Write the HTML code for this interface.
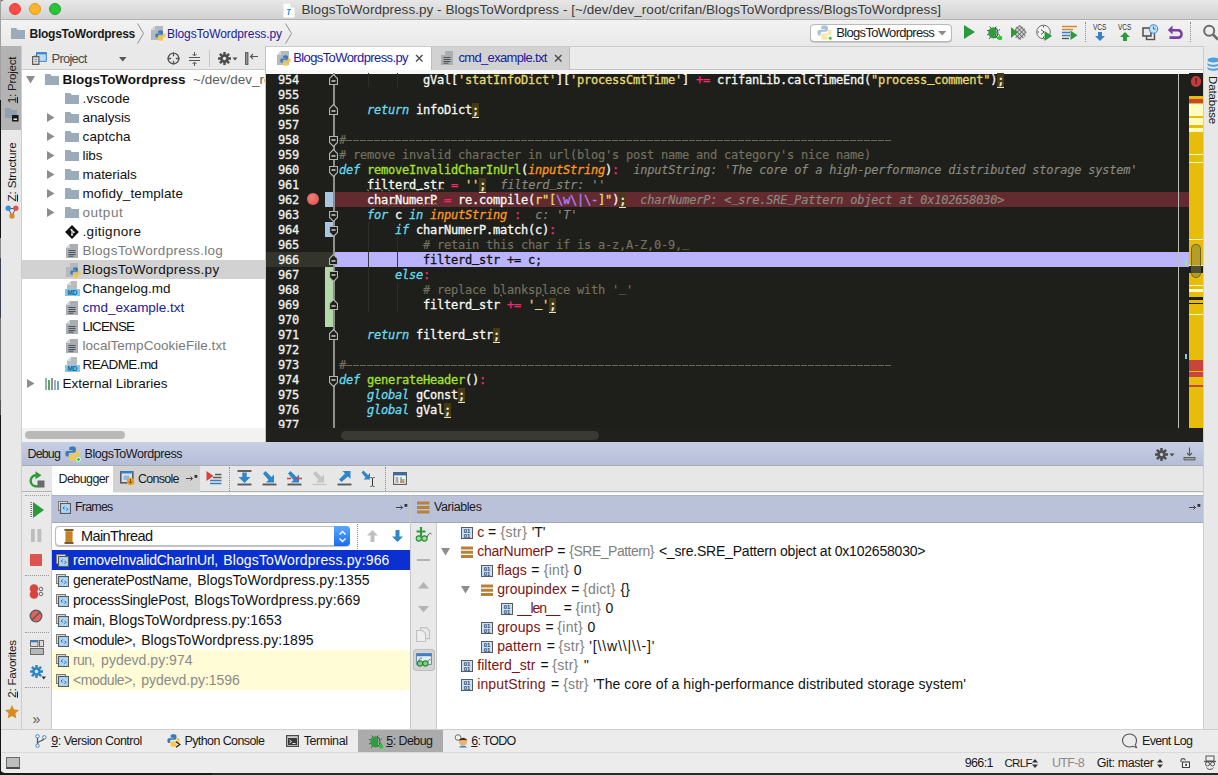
<!DOCTYPE html>
<html lang="en">
<head>
<meta charset="utf-8">
<title>BlogsToWordpress.py - BlogsToWordpress</title>
<style>
html,body{margin:0;padding:0;background:#ececec;}
body{width:1218px;height:775px;overflow:hidden;font-family:"Liberation Sans","Noto Sans CJK SC",sans-serif;}
#app{position:relative;width:1218px;height:775px;overflow:hidden;background:#ececec;}
#app div,#app span.t,#app svg{position:absolute;}
#app div{box-sizing:border-box;}
span.t{white-space:pre;}
.code,.ln{font-family:"DejaVu Sans Mono","Liberation Mono",monospace;font-size:12px;letter-spacing:-0.224px;font-weight:400;line-height:15px;height:15px;white-space:pre;-webkit-text-stroke:0.3px currentColor;}
.code{color:#f8f8f2;}
.ln{color:#f0f0ea;}
.kw{color:#66d9ef;font-style:italic;}
.fn{color:#a6e22e;}
.pm{color:#fd971f;font-style:italic;}
.op{color:#f92672;}
.st{color:#e6db74;}
.cm{color:#75715e;-webkit-text-stroke:0.15px currentColor;}
.hint{color:#8a8a80;font-style:italic;-webkit-text-stroke:0.15px currentColor;}
.rx{color:#ae81ff;}
.sc{background:#463a10;border-bottom:1px solid #e8e0c0;}
.wv{text-decoration:underline wavy rgba(190,200,150,.7) 0.8px;text-underline-offset:-1.5px;}
.us{position:relative;top:-2px;}

</style>
</head>
<body>
<div id="app">
<div style="left:0px;top:0px;width:8px;height:8px;background:#6a6a6a;"></div>
<div style="left:0px;top:0px;width:1218px;height:20.3px;background:linear-gradient(#e8e8e8,#d1d1d1);border-bottom:1px solid #b2b2b2;border-radius:5px 0 0 0;"></div>
<div style="left:9.2px;top:2.9px;width:12px;height:12px;border-radius:50%;background:#fb4b49;border:0.5px solid #df3f3d;"></div>
<div style="left:29.200000000000003px;top:2.9px;width:12px;height:12px;border-radius:50%;background:#fdb32a;border:0.5px solid #de9a22;"></div>
<div style="left:49.2px;top:2.9px;width:12px;height:12px;border-radius:50%;background:#2ac33b;border:0.5px solid #1fa52f;"></div>
<svg style="left:283px;top:3px;" width="12" height="15" viewBox="0 0 12 15"><path d="M0 0h8l4 4v11H0z" fill="#fdfdfd" stroke="#c9c9c9" stroke-width=".6"/><path d="M8 0v4h4" fill="#e4e4e4" stroke="#c9c9c9" stroke-width=".5"/><path d="M4.200 6.500h3.800M6.300 6.500L5.300 12" stroke="#2a8bd8" stroke-width="1.100" fill="none"/></svg>
<span class="t" style="left:301.5px;top:1.0px;line-height:18px;font-size:13.5px;color:#3a3a3a;letter-spacing:0.039px;">BlogsToWordpress.py - BlogsToWordpress - [~/dev/dev_root/crifan/BlogsToWordpress/BlogsToWordpress]</span>
<div style="left:0px;top:20px;width:1218px;height:26px;background:linear-gradient(#f2f2f2,#e9e9e9);"></div>
<div style="left:0px;top:45.5px;width:1218px;height:1px;background:#cbcbcb;"></div>
<svg style="left:11px;top:28px;" width="14" height="11" viewBox="0 0 14 11"><path d="M0 0h5.2l1.6 2H14v9H0z" fill="#9cabb9"/></svg>
<span class="t" style="left:29.5px;top:24.5px;line-height:18px;font-size:12px;color:#1a1a1a;font-weight:700;letter-spacing:-0.255px;">BlogsToWordpress</span>
<svg style="left:136px;top:23px;" width="9" height="21" viewBox="0 0 9 21"><path d="M1.500.5L7.500 10.500 1.500 20.500" fill="none" stroke="#8f8f8f" stroke-width="1"/></svg>
<svg style="left:151px;top:26px;" width="12" height="14" viewBox="0 0 12 14"><path d="M4 0h8v14H0V4z" fill="#b4b9be"/><path d="M0 4h4V0z" fill="#d2d6da"/></svg>
<svg style="left:154.6px;top:30.2px;" width="11" height="11" viewBox="0 0 12 12"><path d="M5.9.3C3.2.3 3.4 1.5 3.4 1.5v1.9h2.7v.5H2.2S.3 3.700.3 6.100c0 2.400 1.600 2.300 1.600 2.300h1V6.900s-.1-1.600 1.600-1.600h2.700s1.500 0 1.500-1.500V1.700S8.900.3 5.900.3z" fill="#3d7ab5"/><path d="M6.100 11.700c2.700 0 2.500-1.200 2.500-1.200V8.600H5.900v-.5h3.900s1.900.2 1.900-2.200c0-2.400-1.600-2.300-1.600-2.300h-1v1.500s.1 1.600-1.600 1.600H4.800s-1.500 0-1.500 1.500v2.100s-.2 1.400 2.800 1.400z" fill="#f7c93e"/></svg>
<span class="t" style="left:167px;top:24.5px;line-height:18px;font-size:12px;color:#1a1a9a;letter-spacing:-0.079px;">BlogsToWordpress.py</span>
<svg style="left:283.5px;top:23px;" width="9" height="21" viewBox="0 0 9 21"><path d="M1.500.5L7.500 10.500 1.500 20.500" fill="none" stroke="#8f8f8f" stroke-width="1"/></svg>
<div style="left:810px;top:23.5px;width:142px;height:18px;background:#fff;border:1px solid #b9b9b9;border-radius:4px;box-shadow:0 0.5px 0 #a9a9a9;"></div>
<svg style="left:816.5px;top:25px;" width="15" height="15" viewBox="0 0 12 12"><g opacity=".45"><path d="M5.9.3C3.2.3 3.4 1.5 3.4 1.5v1.9h2.7v.5H2.2S.3 3.7.3 6.100c0 2.400 1.600 2.300 1.600 2.300h1V6.900s-.1-1.600 1.600-1.600h2.700s1.500 0 1.500-1.500V1.700S8.900.3 5.900.3z" fill="#3d7ab5"/><path d="M6.100 11.700c2.700 0 2.500-1.200 2.500-1.200V8.600H5.900v-.5h3.900s1.900.2 1.900-2.200c0-2.400-1.600-2.300-1.600-2.300h-1v1.500s.1 1.600-1.600 1.600H4.800s-1.500 0-1.500 1.500v2.100s-.2 1.400 2.800 1.400z" fill="#f7c93e"/></g><circle cx="10.600" cy="10.600" r="1.400" fill="#1fd02a" stroke="#fff" stroke-width=".4"/></svg>
<span class="t" style="left:836.3px;top:23.5px;line-height:18px;font-size:13px;color:#1a1a1a;letter-spacing:-0.686px;">BlogsToWordpress</span>
<svg style="left:938px;top:31px;" width="9" height="5" viewBox="0 0 9 5"><path d="M0 0h8.400L4.200 4.500z" fill="#8a8a8a"/></svg>
<svg style="left:964px;top:25px;" width="11" height="14" viewBox="0 0 11 14"><path d="M0 0L11 7 0 14z" fill="#2b9a3c"/></svg>
<svg style="left:986px;top:24px;" width="17" height="17" viewBox="0 0 17 17"><path d="M3.500 2.500l2 2M10.500 2.500l-2 2M1 6.500h2.500M1 11l2.500-1M3 15l2-2.500M12.500 6.500l1.500-1M12.500 10.500l1.500 1M10.500 13l1.500 2" stroke="#555" stroke-width="1" fill="none"/><ellipse cx="7.300" cy="8.800" rx="5" ry="5.600" fill="#2f9c40"/><path d="M8.800 3.450A5 5.600 0 0 1 8.800 14.150A9 9 0 0 0 8.800 3.450z" fill="#3a3a3a"/><path d="M10.300 5.500A7 7 0 0 1 10.300 12" stroke="#d8d8d8" stroke-width=".8" fill="none"/><circle cx="14" cy="14" r="2.300" fill="#1fd02a"/></svg>
<svg style="left:1011px;top:25px;" width="16" height="15" viewBox="0 0 16 15"><defs><pattern id="hx" width="3" height="3" patternUnits="userSpaceOnUse" patternTransform="rotate(45)"><rect width="3" height="3" fill="#d8d8d8"/><path d="M0 0h3M0 0v3" stroke="#555" stroke-width="1.300"/></pattern></defs><path d="M4 2.500L9 0l5 3.500 1.500 4L14 12l-5 3-5-2.500z" fill="url(#hx)"/><path d="M0 2l6.500 5.500L0 13z" fill="#2b9a3c"/></svg>
<svg style="left:1036px;top:24px;" width="17" height="17" viewBox="0 0 17 17"><circle cx="7.500" cy="8" r="6.800" fill="#f4f4f4" stroke="#6a6a6a" stroke-width="1"/><path d="M7.500 2v1.500M7.500 12.500V14M1.500 8H3M5 5.500L8 8 5 10.500" stroke="#555" stroke-width="1" fill="none"/><path d="M8.500 7l7.500 5-7.500 5z" fill="#2b9a3c"/></svg>
<svg style="left:1061px;top:25px;" width="17" height="15" viewBox="0 0 17 15"><path d="M1 1.500h15M1 4.500h11" stroke="#c98b3c" stroke-width="1.500"/><path d="M1 7.500h8M1 10.500h8" stroke="#3b7fc4" stroke-width="1.500"/><path d="M1 13.500h7" stroke="#555" stroke-width="1.300"/><path d="M9.500 5.500l7 4.700-7 4.800z" fill="#2b9a3c"/></svg>
<div style="left:1085px;top:22px;width:1px;height:20px;border-left:1px dotted #8a8a8a;"></div>
<span class="t" style="left:1093px;top:23.0px;line-height:10px;font-size:8.2px;color:#333;transform:scaleX(.8);transform-origin:0 50%;">VCS</span>
<svg style="left:1095px;top:31.5px;" width="10" height="9" viewBox="0 0 10 9"><path d="M3 0h4v4h3L5 9 0 4h3z" fill="#3b82c4"/></svg>
<span class="t" style="left:1117.7px;top:23.0px;line-height:10px;font-size:8.2px;color:#333;transform:scaleX(.8);transform-origin:0 50%;">VCS</span>
<svg style="left:1120px;top:31.5px;" width="10" height="9" viewBox="0 0 10 9"><path d="M5 0l5 5H7v4H3V5H0z" fill="#2b9a3c"/></svg>
<svg style="left:1142px;top:24px;" width="17" height="17" viewBox="0 0 17 17"><rect x="4.500" y="7.500" width="8" height="8" fill="#e9e9e9" stroke="#555" stroke-width="1.400"/><rect x="1" y="4" width="8" height="8" fill="#e9e9e9" stroke="#555" stroke-width="1.600"/><circle cx="11.500" cy="5" r="4.200" fill="#bfe0f7" stroke="#3b8fd6" stroke-width="1.100"/><path d="M11.500 2.500V5h2" stroke="#2a6fb0" stroke-width="1" fill="none"/></svg>
<svg style="left:1167px;top:25px;" width="16" height="15" viewBox="0 0 16 15"><path d="M5.500 0.500L0.800 5l4.700 4.500V6.500h5.200c1.600 0 2.600 1 2.600 2.400s-1 2.400-2.600 2.400H2.500v2.700h8.500c3 0 4.800-2.200 4.800-5.100s-1.800-5-4.800-5H5.500z" fill="#7b3fa0"/></svg>
<div style="left:1190px;top:22px;width:1px;height:20px;border-left:1px dotted #8a8a8a;"></div>
<svg style="left:1202px;top:23px;" width="16" height="18" viewBox="0 0 16 18"><circle cx="7.200" cy="7.700" r="5" fill="none" stroke="#6a6a6a" stroke-width="2"/><path d="M11 11.500l5 5" stroke="#6a6a6a" stroke-width="2.600"/></svg>
<div style="left:0px;top:46px;width:22px;height:707px;background:#e8e8e8;border-right:1px solid #cdcdcd;"></div>
<div style="left:0px;top:46px;width:21px;height:84px;background:#b3b3b3;"></div>
<span class="t" style="left:11.500px;top:79.800px;font-size:11.5px;letter-spacing:-0.21px;color:#1a1a1a;line-height:14px;transform:translate(-50%,-50%) rotate(-90deg);"><u>1</u>: Project</span>
<span class="t" style="left:11.500px;top:171.800px;font-size:11.5px;letter-spacing:-0.09px;color:#1a1a1a;line-height:14px;transform:translate(-50%,-50%) rotate(-90deg);"><u>Z</u>: Structure</span>
<span class="t" style="left:11.500px;top:669.300px;font-size:11.5px;letter-spacing:-0.22px;color:#1a1a1a;line-height:14px;transform:translate(-50%,-50%) rotate(-90deg);"><u>2</u>: Favorites</span>
<svg style="left:5px;top:107.5px;" width="14" height="14" viewBox="0 0 14 14"><path d="M0 0h5l1.500 2H12v8H0z" fill="#8fa0b0"/><rect x="7" y="7" width="6.500" height="6.500" fill="#1a1a1a"/><rect x="8.500" y="10.500" width="3.500" height="1.500" fill="#e8e8e8"/></svg>
<svg style="left:5px;top:204.5px;" width="14" height="14" viewBox="0 0 14 14"><path d="M3.500 3.500L10.500 3.500 7 11z" fill="none" stroke="#555" stroke-width="1"/><circle cx="3.200" cy="3.200" r="2.700" fill="#3b8fd6"/><circle cx="10.800" cy="3.200" r="2.700" fill="#e0524c"/><circle cx="7" cy="11" r="2.700" fill="#d98a30"/></svg>
<svg style="left:5px;top:704.5px;" width="14" height="13" viewBox="0 0 14 13"><path d="M7 0l2.100 4.500 4.900.6-3.600 3.400.9 4.900L7 11l-4.300 2.400.9-4.900L0 5.100l4.900-.6z" fill="#d98a20"/></svg>
<div style="left:22px;top:46px;width:244px;height:24px;background:#e9e9e9;border-bottom:1px solid #c9c9c9;"></div>
<div style="left:22px;top:70px;width:243px;height:362px;background:#fff;"></div>
<div style="left:265px;top:46px;width:1px;height:396px;background:#c4c4c4;"></div>
<span class="t" style="left:51.5px;top:49.5px;line-height:18px;font-size:13px;color:#4a4a4a;letter-spacing:-0.781px;">Project</span>
<svg style="left:119px;top:57px;" width="8" height="5" viewBox="0 0 8 5"><path d="M0 0h7.500L3.750 4.500z" fill="#555"/></svg>
<svg style="left:32px;top:51.5px;" width="15" height="13" viewBox="0 0 15 13"><rect x="4.500" y="0.700" width="9.800" height="8.600" fill="#b9dcf6" stroke="#3b82c4" stroke-width="1"/><rect x="4.500" y="0.700" width="9.800" height="1.600" fill="#3b82c4"/><rect x="0.600" y="4.600" width="6.300" height="7.800" fill="#dcdcdc" stroke="#5f5f5f" stroke-width="1.200"/><rect x="2.300" y="3.600" width="3" height="1.600" fill="#5f5f5f"/><path d="M2.500 7.500h2.600M2.500 9.500h2.600" stroke="#8a8a8a" stroke-width=".8"/></svg>
<svg style="left:166.5px;top:52px;" width="13" height="13" viewBox="0 0 13 13"><circle cx="6.500" cy="6.500" r="5.400" fill="none" stroke="#555" stroke-width="1.300"/><path d="M6.500 0.500v3.700M6.500 8.800v3.700M0.500 6.500h3.700M8.800 6.500h3.700" stroke="#555" stroke-width="1.300"/></svg>
<svg style="left:188px;top:51.5px;" width="13" height="14" viewBox="0 0 13 14"><path d="M1 5.500h11M1 8.500h11" stroke="#555" stroke-width="1"/><path d="M6.500 0v3.500M4.500 2l2 2 2-2M6.500 14v-3.500M4.500 12l2-2 2 2" stroke="#555" stroke-width="1" fill="none"/></svg>
<div style="left:209px;top:50px;width:1px;height:17px;background:#c6c6c6;"></div>
<svg style="left:217.5px;top:52px;" width="21" height="13" viewBox="0 0 21 13"><g transform="translate(6.5 6.5)"><g fill="#4d4d4d"><rect x="-1.250" y="-6.500" width="2.500" height="4" transform="rotate(0)"/><rect x="-1.250" y="-6.500" width="2.500" height="4" transform="rotate(45)"/><rect x="-1.250" y="-6.500" width="2.500" height="4" transform="rotate(90)"/><rect x="-1.250" y="-6.500" width="2.500" height="4" transform="rotate(135)"/><rect x="-1.250" y="-6.500" width="2.500" height="4" transform="rotate(180)"/><rect x="-1.250" y="-6.500" width="2.500" height="4" transform="rotate(225)"/><rect x="-1.250" y="-6.500" width="2.500" height="4" transform="rotate(270)"/><rect x="-1.250" y="-6.500" width="2.500" height="4" transform="rotate(315)"/></g><circle r="4.300" fill="#4d4d4d"/><circle r="1.700" fill="#e9e9e9"/></g><path d="M14.500 5.500h5l-2.500 3z" fill="#4d4d4d"/></svg>
<svg style="left:245px;top:52px;" width="14" height="13" viewBox="0 0 14 13"><rect x=".6" y=".6" width="2.300" height="11.800" fill="#9a9a9a" stroke="#555" stroke-width="1"/><path d="M13 4.500H5.500M8 2L5.500 4.500 8 7" stroke="#555" stroke-width="1.100" fill="none"/></svg>
<div style="left:22px;top:260px;width:243px;height:19px;background:#d2d2d2;"></div>
<svg style="left:25.5px;top:76px;" width="9" height="8" viewBox="0 0 9 8"><path d="M0 0h9L4.500 7.500z" fill="#8d8d8d"/></svg>
<svg style="left:45px;top:74px;" width="14" height="11" viewBox="0 0 14 11"><path d="M0 0h5.2l1.6 2H14v9H0z" fill="#9cabb9"/></svg>
<span class="t" style="left:62.5px;top:70.5px;line-height:18px;font-size:13.5px;color:#111;font-weight:700;letter-spacing:-0.017px;">BlogsToWordpress</span>
<span class="t" style="left:193px;top:70.5px;line-height:18px;font-size:13.5px;color:#5c5c5c;width:72px;overflow:hidden;">~/dev/dev_root/crifan/BlogsToWordpress</span>
<svg style="left:65px;top:93.0px;" width="14" height="11" viewBox="0 0 14 11"><path d="M0 0h5.2l1.6 2H14v9H0z" fill="#9cabb9"/></svg>
<span class="t" style="left:82.5px;top:89.5px;line-height:18px;font-size:13.5px;color:#111;letter-spacing:0.138px;">.vscode</span>
<svg style="left:46.5px;top:113.0px;" width="8" height="9" viewBox="0 0 8 9"><path d="M0 0l7.500 4.500L0 9z" fill="#8d8d8d"/></svg>
<svg style="left:65px;top:112.0px;" width="14" height="11" viewBox="0 0 14 11"><path d="M0 0h5.2l1.6 2H14v9H0z" fill="#9cabb9"/></svg>
<span class="t" style="left:82.5px;top:108.5px;line-height:18px;font-size:13.5px;color:#111;letter-spacing:-0.098px;">analysis</span>
<svg style="left:46.5px;top:132.0px;" width="8" height="9" viewBox="0 0 8 9"><path d="M0 0l7.500 4.500L0 9z" fill="#8d8d8d"/></svg>
<svg style="left:65px;top:131.0px;" width="14" height="11" viewBox="0 0 14 11"><path d="M0 0h5.2l1.6 2H14v9H0z" fill="#9cabb9"/></svg>
<span class="t" style="left:82.5px;top:127.5px;line-height:18px;font-size:13.5px;color:#111;letter-spacing:0.136px;">captcha</span>
<svg style="left:46.5px;top:151.0px;" width="8" height="9" viewBox="0 0 8 9"><path d="M0 0l7.500 4.500L0 9z" fill="#8d8d8d"/></svg>
<svg style="left:65px;top:150.0px;" width="14" height="11" viewBox="0 0 14 11"><path d="M0 0h5.2l1.6 2H14v9H0z" fill="#9cabb9"/></svg>
<span class="t" style="left:82.5px;top:146.5px;line-height:18px;font-size:13.5px;color:#111;letter-spacing:-0.066px;">libs</span>
<svg style="left:46.5px;top:170.0px;" width="8" height="9" viewBox="0 0 8 9"><path d="M0 0l7.500 4.500L0 9z" fill="#8d8d8d"/></svg>
<svg style="left:65px;top:169.0px;" width="14" height="11" viewBox="0 0 14 11"><path d="M0 0h5.2l1.6 2H14v9H0z" fill="#9cabb9"/></svg>
<span class="t" style="left:82.5px;top:165.5px;line-height:18px;font-size:13.5px;color:#111;letter-spacing:-0.057px;">materials</span>
<svg style="left:46.5px;top:189.0px;" width="8" height="9" viewBox="0 0 8 9"><path d="M0 0l7.500 4.500L0 9z" fill="#8d8d8d"/></svg>
<svg style="left:65px;top:188.0px;" width="14" height="11" viewBox="0 0 14 11"><path d="M0 0h5.2l1.6 2H14v9H0z" fill="#9cabb9"/></svg>
<span class="t" style="left:82.5px;top:184.5px;line-height:18px;font-size:13.5px;color:#111;letter-spacing:0.096px;">mofidy_template</span>
<svg style="left:46.5px;top:208.0px;" width="8" height="9" viewBox="0 0 8 9"><path d="M0 0l7.500 4.500L0 9z" fill="#8d8d8d"/></svg>
<svg style="left:65px;top:207.0px;" width="14" height="11" viewBox="0 0 14 11"><path d="M0 0h5.2l1.6 2H14v9H0z" fill="#9cabb9"/></svg>
<span class="t" style="left:82.5px;top:203.5px;line-height:18px;font-size:13.5px;color:#7a7a7a;letter-spacing:0.534px;">output</span>
<svg style="left:64.5px;top:224.5px;" width="14" height="14" viewBox="0 0 14 14"><rect x="2.100" y="2.100" width="9.800" height="9.800" transform="rotate(45 7 7)" fill="#111"/><path d="M5.300 3.800l3.200 3.200M7 5.500v4.200" stroke="#fff" stroke-width="1" fill="none"/><circle cx="7" cy="9.800" r="1" fill="#fff"/><circle cx="8.700" cy="7.200" r="1" fill="#fff"/><circle cx="6.800" cy="5.200" r=".9" fill="#fff"/></svg>
<span class="t" style="left:82.5px;top:222.5px;line-height:18px;font-size:13.5px;color:#111;letter-spacing:0.320px;">.gitignore</span>
<svg style="left:66px;top:243.5px;" width="12" height="14" viewBox="0 0 12 14"><path d="M4 0h8v14H0V4z" fill="#a9aeb3"/><path d="M0 4h4V0z" fill="#cfd3d7"/><path d="M2.5 6.5h7M2.5 8.5h7M2.5 10.5h7M2.5 12.2h5" stroke="#4f5357" stroke-width="1"/></svg>
<span class="t" style="left:82.5px;top:241.5px;line-height:18px;font-size:13.5px;color:#7a7a7a;letter-spacing:0.284px;">BlogsToWordpress.log</span>
<svg style="left:66px;top:262.5px;" width="12" height="14" viewBox="0 0 12 14"><path d="M4 0h8v14H0V4z" fill="#b4b9be"/><path d="M0 4h4V0z" fill="#d2d6da"/></svg>
<svg style="left:69.6px;top:266.7px;" width="11" height="11" viewBox="0 0 12 12"><path d="M5.9.3C3.2.3 3.4 1.5 3.4 1.5v1.9h2.7v.5H2.2S.3 3.700.3 6.100c0 2.400 1.600 2.300 1.600 2.300h1V6.900s-.1-1.600 1.600-1.600h2.700s1.500 0 1.500-1.500V1.700S8.900.3 5.900.3z" fill="#3d7ab5"/><path d="M6.100 11.700c2.700 0 2.500-1.200 2.500-1.200V8.600H5.900v-.5h3.900s1.900.2 1.900-2.200c0-2.400-1.600-2.300-1.600-2.300h-1v1.500s.1 1.600-1.600 1.600H4.800s-1.500 0-1.500 1.500v2.100s-.2 1.400 2.800 1.400z" fill="#f7c93e"/></svg>
<span class="t" style="left:82.5px;top:260.5px;line-height:18px;font-size:13.5px;color:#111;letter-spacing:0.312px;">BlogsToWordpress.py</span>
<svg style="left:65px;top:280.5px;" width="15" height="15" viewBox="0 0 15 15"><path d="M6 0h6v8H2V4z" fill="#b9bdc1"/><path d="M2 4h4V0z" fill="#d6d9dc"/><rect x="0" y="8" width="15" height="7" fill="#79cbf3"/><text x="7.5" y="14" font-size="6.5" font-weight="700" text-anchor="middle" fill="#2a5a7a" font-family="Liberation Sans, sans-serif">MD</text></svg>
<span class="t" style="left:82.5px;top:279.5px;line-height:18px;font-size:13.5px;color:#111;letter-spacing:0.016px;">Changelog.md</span>
<svg style="left:66px;top:300.5px;" width="12" height="14" viewBox="0 0 12 14"><path d="M4 0h8v14H0V4z" fill="#a9aeb3"/><path d="M0 4h4V0z" fill="#cfd3d7"/><path d="M2.5 6.5h7M2.5 8.5h7M2.5 10.5h7M2.5 12.2h5" stroke="#4f5357" stroke-width="1"/></svg>
<span class="t" style="left:82.5px;top:298.5px;line-height:18px;font-size:13.5px;color:#1a1a9a;letter-spacing:-0.020px;">cmd_example.txt</span>
<svg style="left:66px;top:319.5px;" width="12" height="14" viewBox="0 0 12 14"><path d="M4 0h8v14H0V4z" fill="#a9aeb3"/><path d="M0 4h4V0z" fill="#cfd3d7"/><path d="M2.5 6.5h7M2.5 8.5h7M2.5 10.5h7M2.5 12.2h5" stroke="#4f5357" stroke-width="1"/></svg>
<span class="t" style="left:82.5px;top:317.5px;line-height:18px;font-size:13.5px;color:#111;letter-spacing:-0.862px;">LICENSE</span>
<svg style="left:66px;top:338.5px;" width="12" height="14" viewBox="0 0 12 14"><path d="M4 0h8v14H0V4z" fill="#a9aeb3"/><path d="M0 4h4V0z" fill="#cfd3d7"/><path d="M2.5 6.5h7M2.5 8.5h7M2.5 10.5h7M2.5 12.2h5" stroke="#4f5357" stroke-width="1"/></svg>
<span class="t" style="left:82.5px;top:336.5px;line-height:18px;font-size:13.5px;color:#7a7a7a;letter-spacing:0.041px;">localTempCookieFile.txt</span>
<svg style="left:65px;top:356.5px;" width="15" height="15" viewBox="0 0 15 15"><path d="M6 0h6v8H2V4z" fill="#b9bdc1"/><path d="M2 4h4V0z" fill="#d6d9dc"/><rect x="0" y="8" width="15" height="7" fill="#79cbf3"/><text x="7.5" y="14" font-size="6.5" font-weight="700" text-anchor="middle" fill="#2a5a7a" font-family="Liberation Sans, sans-serif">MD</text></svg>
<span class="t" style="left:82.5px;top:355.5px;line-height:18px;font-size:13.5px;color:#111;letter-spacing:-0.585px;">README.md</span>
<svg style="left:26.5px;top:379.0px;" width="8" height="9" viewBox="0 0 8 9"><path d="M0 0l7.500 4.500L0 9z" fill="#8d8d8d"/></svg>
<svg style="left:45px;top:377.5px;" width="14" height="12" viewBox="0 0 14 12"><path d="M1 0v12" stroke="#7a8a99" stroke-width="1.500"/><path d="M4 2v10" stroke="#3fa046" stroke-width="1.800"/><path d="M7 0v12" stroke="#7a8a99" stroke-width="1.800"/><path d="M10 2v10" stroke="#9aa7b4" stroke-width="1.800"/><path d="M13 3v9" stroke="#3b82c4" stroke-width="1.500"/></svg>
<span class="t" style="left:62.5px;top:374.5px;line-height:18px;font-size:13.5px;color:#111;letter-spacing:-0.003px;">External Libraries</span>
<div style="left:22px;top:427.6px;width:243px;height:14.2px;background:#f2f2f2;"></div>
<div style="left:25px;top:431px;width:100.3px;height:7.6px;background:#b9b9b9;border-radius:4px;"></div>
<div style="left:266px;top:46.5px;width:937px;height:23.5px;background:#ebebeb;border-bottom:1px solid #c2c2c2;"></div>
<div style="left:266px;top:47px;width:164.5px;height:26.7px;background:#fff;"></div>
<div style="left:430.5px;top:47px;width:139.5px;height:22.5px;background:#d2d2d2;border-left:1px solid #bdbdbd;border-right:1px solid #bdbdbd;"></div>
<div style="left:266px;top:70px;width:937px;height:3.7px;background:#f7f7f7;"></div>
<svg style="left:276.5px;top:51px;" width="12" height="14" viewBox="0 0 12 14"><path d="M4 0h8v14H0V4z" fill="#b4b9be"/><path d="M0 4h4V0z" fill="#d2d6da"/></svg>
<svg style="left:280.1px;top:55.2px;" width="11" height="11" viewBox="0 0 12 12"><path d="M5.9.3C3.2.3 3.4 1.5 3.4 1.5v1.9h2.7v.5H2.2S.3 3.700.3 6.100c0 2.400 1.600 2.300 1.600 2.300h1V6.900s-.1-1.600 1.600-1.600h2.700s1.500 0 1.500-1.500V1.700S8.900.3 5.900.3z" fill="#3d7ab5"/><path d="M6.100 11.700c2.700 0 2.500-1.200 2.500-1.200V8.600H5.900v-.5h3.900s1.900.2 1.900-2.200c0-2.400-1.600-2.300-1.600-2.300h-1v1.500s.1 1.600-1.600 1.600H4.800s-1.500 0-1.500 1.500v2.100s-.2 1.400 2.800 1.400z" fill="#f7c93e"/></svg>
<span class="t" style="left:293.2px;top:49.0px;line-height:18px;font-size:13px;color:#1a1a9a;letter-spacing:-0.601px;">BlogsToWordpress.py</span>
<svg style="left:414.5px;top:54px;" width="9" height="9" viewBox="0 0 9 9"><path d="M1 1l6.500 6.500M7.500 1L1 7.500" stroke="#4a4a4a" stroke-width="1.400" fill="none"/></svg>
<svg style="left:441px;top:51px;" width="12" height="14" viewBox="0 0 12 14"><path d="M4 0h8v14H0V4z" fill="#a9aeb3"/><path d="M0 4h4V0z" fill="#cfd3d7"/><path d="M2.5 6.5h7M2.5 8.5h7M2.5 10.5h7M2.5 12.2h5" stroke="#4f5357" stroke-width="1"/></svg>
<span class="t" style="left:458.5px;top:49.0px;line-height:18px;font-size:13px;color:#1a1a9a;letter-spacing:-0.671px;">cmd_example.txt</span>
<svg style="left:553.5px;top:54px;" width="9" height="9" viewBox="0 0 9 9"><path d="M1 1l6.500 6.500M7.500 1L1 7.500" stroke="#4a4a4a" stroke-width="1.400" fill="none"/></svg>
<div style="left:266px;top:73.6px;width:937px;height:368.3px;background:#1e1f1a;"></div>
<div style="left:266px;top:252px;width:67px;height:15px;background:#33342c;"></div>
<div style="left:333px;top:252px;width:856px;height:15px;background:#b9b4fb;"></div>
<div style="left:333px;top:192px;width:856px;height:15px;background:#632b2f;"></div>
<div style="left:325px;top:192px;width:8px;height:15px;background:#a9c5e2;"></div>
<div style="left:325px;top:222px;width:8px;height:15px;background:#a9c5e2;"></div>
<div style="left:325px;top:267px;width:8px;height:60px;background:#b4d9a8;"></div>
<div style="left:333px;top:73px;width:1.5px;height:355px;background:#8e8e8e;"></div>
<div style="left:368px;top:222px;width:1px;height:90px;background:#2d2e29;"></div>
<div style="left:396.5px;top:237px;width:1px;height:30px;background:#2d2e29;"></div>
<div style="left:396.5px;top:282px;width:1px;height:30px;background:#2d2e29;"></div>
<div style="left:368px;top:73px;width:1px;height:14px;background:#2d2e29;"></div>
<div style="left:396.5px;top:73px;width:1px;height:14px;background:#2d2e29;"></div>
<div style="left:368px;top:252px;width:1px;height:15px;background:#3a3a44;"></div>
<div style="left:396.5px;top:252px;width:1px;height:15px;background:#3a3a44;"></div>
<div style="left:1178px;top:73.6px;width:1.1px;height:354.4px;background:#bdbdbd;"></div>
<div style="left:307px;top:193px;width:12px;height:12px;border-radius:50%;background:radial-gradient(circle at 40% 35%,#f0807a,#e05a55 70%,#d24a46);"></div>
<svg style="left:329px;top:74.2px;" width="9" height="11" viewBox="0 0 9 11"><path d="M0.500 10.500h8v-6l-4-4-4 4z" fill="#1e1f1a" stroke="#b2b2b2" stroke-width="1.200"/><path d="M2.500 7h4" stroke="#dcdcdc" stroke-width="1.400"/></svg>
<svg style="left:329px;top:104.2px;" width="9" height="11" viewBox="0 0 9 11"><path d="M0.500 10.500h8v-6l-4-4-4 4z" fill="#1e1f1a" stroke="#b2b2b2" stroke-width="1.200"/><path d="M2.500 7h4" stroke="#dcdcdc" stroke-width="1.400"/></svg>
<svg style="left:329px;top:135.8px;" width="9" height="11" viewBox="0 0 9 11"><path d="M0.500 0.500h8v6l-4 4-4-4z" fill="#1e1f1a" stroke="#b2b2b2" stroke-width="1.200"/><path d="M2.500 4h4" stroke="#dcdcdc" stroke-width="1.400"/></svg>
<svg style="left:329px;top:149.2px;" width="9" height="11" viewBox="0 0 9 11"><path d="M0.500 10.500h8v-6l-4-4-4 4z" fill="#1e1f1a" stroke="#b2b2b2" stroke-width="1.200"/><path d="M2.500 7h4" stroke="#dcdcdc" stroke-width="1.400"/></svg>
<svg style="left:329px;top:165.8px;" width="9" height="11" viewBox="0 0 9 11"><path d="M0.500 0.500h8v6l-4 4-4-4z" fill="#1e1f1a" stroke="#b2b2b2" stroke-width="1.200"/><path d="M2.500 4h4" stroke="#dcdcdc" stroke-width="1.400"/></svg>
<svg style="left:329px;top:210.8px;" width="9" height="11" viewBox="0 0 9 11"><path d="M0.500 0.500h8v6l-4 4-4-4z" fill="#1e1f1a" stroke="#b2b2b2" stroke-width="1.200"/><path d="M2.500 4h4" stroke="#dcdcdc" stroke-width="1.400"/></svg>
<svg style="left:329px;top:225.8px;" width="9" height="11" viewBox="0 0 9 11"><path d="M0.500 0.500h8v6l-4 4-4-4z" fill="#1e1f1a" stroke="#b2b2b2" stroke-width="1.200"/><path d="M2.500 4h4" stroke="#dcdcdc" stroke-width="1.400"/></svg>
<svg style="left:329px;top:254.2px;" width="9" height="11" viewBox="0 0 9 11"><path d="M0.500 10.500h8v-6l-4-4-4 4z" fill="#1e1f1a" stroke="#b2b2b2" stroke-width="1.200"/><path d="M2.500 7h4" stroke="#dcdcdc" stroke-width="1.400"/></svg>
<svg style="left:329px;top:270.8px;" width="9" height="11" viewBox="0 0 9 11"><path d="M0.500 0.500h8v6l-4 4-4-4z" fill="#1e1f1a" stroke="#b2b2b2" stroke-width="1.200"/><path d="M2.500 4h4" stroke="#dcdcdc" stroke-width="1.400"/></svg>
<svg style="left:329px;top:299.2px;" width="9" height="11" viewBox="0 0 9 11"><path d="M0.500 10.500h8v-6l-4-4-4 4z" fill="#1e1f1a" stroke="#b2b2b2" stroke-width="1.200"/><path d="M2.500 7h4" stroke="#dcdcdc" stroke-width="1.400"/></svg>
<svg style="left:329px;top:329.2px;" width="9" height="11" viewBox="0 0 9 11"><path d="M0.500 10.500h8v-6l-4-4-4 4z" fill="#1e1f1a" stroke="#b2b2b2" stroke-width="1.200"/><path d="M2.500 7h4" stroke="#dcdcdc" stroke-width="1.400"/></svg>
<svg style="left:329px;top:375.8px;" width="9" height="11" viewBox="0 0 9 11"><path d="M0.500 0.500h8v6l-4 4-4-4z" fill="#1e1f1a" stroke="#b2b2b2" stroke-width="1.200"/><path d="M2.500 4h4" stroke="#dcdcdc" stroke-width="1.400"/></svg>
<div class="ln" style="left:278px;top:73px;">954</div>
<div class="code" style="left:339px;top:73px;">            gVal[<span class="st">'statInfoDict'</span>][<span class="st">'processCmtTime'</span>] <span class="op">+=</span> crifanLib.calcTimeEnd(<span class="st">"process<span class="us">_</span>comment"</span>)<span class="sc">;</span></div>
<div class="ln" style="left:278px;top:88px;">955</div>
<div class="ln" style="left:278px;top:103px;">956</div>
<div class="code" style="left:339px;top:103px;">    <span class="kw">return</span> infoDict<span class="sc">;</span></div>
<div class="ln" style="left:278px;top:118px;">957</div>
<div class="ln" style="left:278px;top:133px;">958</div>
<div class="code" style="left:339px;top:133px;"><span class="cm dash">#------------------------------------------------------------------------------</span></div>
<div class="ln" style="left:278px;top:148px;">959</div>
<div class="code" style="left:339px;top:148px;"><span class="cm"># remove invalid character in url(blog's post name and category's nice name)</span></div>
<div class="ln" style="left:278px;top:163px;">960</div>
<div class="code" style="left:339px;top:163px;"><span class="kw">def</span> <span class="fn">removeInvalidCharInUrl</span>(<span class="pm">inputString</span>)<span class="op">:</span>  <span class="hint">inputString: 'The core of a high-performance distributed storage system'</span></div>
<div class="ln" style="left:278px;top:178px;">961</div>
<div class="code" style="left:339px;top:178px;">    <span class="wv">filterd<span class="us">_</span>str</span> <span class="op">=</span> <span class="st">''</span><span class="sc">;</span>  <span class="hint">filterd<span class="us">_</span>str: ''</span></div>
<div class="ln" style="left:278px;top:193px;">962</div>
<div class="code" style="left:339px;top:193px;">    cha<span class="wv">rNumerP</span> <span class="op">=</span> re.compile(<span class="st">r"[</span><span class="rx">\w\|\-</span><span class="st">]"</span>)<span class="sc">;</span>  <span class="hint">charNumerP: &lt;<span class="us">_</span>sre.SRE<span class="us">_</span>Pattern object at 0x102658030&gt;</span></div>
<div class="ln" style="left:278px;top:208px;">963</div>
<div class="code" style="left:339px;top:208px;">    <span class="kw">for</span> c <span class="kw">in</span> <span class="pm">inputString</span> <span class="op">:</span>  <span class="hint">c: 'T'</span></div>
<div class="ln" style="left:278px;top:223px;">964</div>
<div class="code" style="left:339px;top:223px;">        <span class="kw">if</span> charNumerP.match(c)<span class="op">:</span></div>
<div class="ln" style="left:278px;top:238px;">965</div>
<div class="code" style="left:339px;top:238px;">            <span class="cm"># retain this char if is a-z,A-Z,0-9,<span class="us">_</span></span></div>
<div class="ln" style="left:278px;top:253px;">966</div>
<div class="code" style="left:339px;top:253px;"><span style="color:#101010">            filterd<span class="us">_</span>str += c;</span></div>
<div class="ln" style="left:278px;top:268px;">967</div>
<div class="code" style="left:339px;top:268px;">        <span class="kw">else</span><span class="op">:</span></div>
<div class="ln" style="left:278px;top:283px;">968</div>
<div class="code" style="left:339px;top:283px;">            <span class="cm"># replace <span class="wv">blanksplace</span> with '<span class="us">_</span>'</span></div>
<div class="ln" style="left:278px;top:298px;">969</div>
<div class="code" style="left:339px;top:298px;">            filterd<span class="us">_</span>str <span class="op">+=</span> <span class="st">'<span class="us">_</span>'</span><span class="sc">;</span></div>
<div class="ln" style="left:278px;top:313px;">970</div>
<div class="ln" style="left:278px;top:328px;">971</div>
<div class="code" style="left:339px;top:328px;">    <span class="kw">return</span> filterd<span class="us">_</span>str<span class="sc">;</span></div>
<div class="ln" style="left:278px;top:343px;">972</div>
<div class="ln" style="left:278px;top:358px;">973</div>
<div class="code" style="left:339px;top:358px;"><span class="cm dash">#------------------------------------------------------------------------------</span></div>
<div class="ln" style="left:278px;top:373px;">974</div>
<div class="code" style="left:339px;top:373px;"><span class="kw">def</span> <span class="fn">generateHeader</span>()<span class="op">:</span></div>
<div class="ln" style="left:278px;top:388px;">975</div>
<div class="code" style="left:339px;top:388px;">    <span class="kw">global</span> gConst<span class="sc">;</span></div>
<div class="ln" style="left:278px;top:403px;">976</div>
<div class="code" style="left:339px;top:403px;">    <span class="kw">global</span> gVal<span class="sc">;</span></div>
<div class="ln" style="left:278px;top:418px;">977</div>
<div style="left:346px;top:140px;width:545px;height:1px;background:repeating-linear-gradient(90deg,#6b6756 0,#6b6756 6px,transparent 6px,transparent 7px);"></div>
<div style="left:346px;top:365px;width:545px;height:1px;background:repeating-linear-gradient(90deg,#6b6756 0,#6b6756 6px,transparent 6px,transparent 7px);"></div>
<div style="left:266px;top:428px;width:937px;height:13.9px;background:#20211c;"></div>
<div style="left:341px;top:430.5px;width:258px;height:9px;background:#393a34;border-radius:4.500px;"></div>
<div style="left:1189px;top:73px;width:14px;height:355px;background:#1e1f1a;"></div>
<div style="left:1189px;top:96px;width:14px;height:170px;background:#e8bc0a;"></div>
<div style="left:1189px;top:273px;width:14px;height:155px;background:#e8bc0a;"></div>
<div style="left:1189px;top:99px;width:14px;height:4px;background:#c8443c;"></div>
<div style="left:1189px;top:104px;width:14px;height:12px;background:#fffcc0;"></div>
<div style="left:1189px;top:118px;width:14px;height:7px;background:#fffcc0;"></div>
<div style="left:1189px;top:128px;width:14px;height:3.5px;background:#fffcc0;"></div>
<div style="left:1189px;top:153.5px;width:14px;height:1px;background:#fffcc0;"></div>
<div style="left:1189px;top:162px;width:14px;height:1px;background:#fffcc0;"></div>
<div style="left:1189px;top:239px;width:14px;height:1px;background:#fffcc0;"></div>
<div style="left:1189px;top:265px;width:14px;height:0.8px;background:#fffcc0;"></div>
<div style="left:1189px;top:285px;width:14px;height:1px;background:#fffcc0;"></div>
<div style="left:1189px;top:289px;width:14px;height:2.5px;background:#fffcc0;"></div>
<div style="left:1189px;top:296.5px;width:14px;height:3px;background:#1e1f1a;"></div>
<div style="left:1189px;top:302.5px;width:14px;height:1px;background:#1e1f1a;"></div>
<div style="left:1189px;top:313.5px;width:14px;height:1px;background:#fffcc0;"></div>
<div style="left:1189px;top:359.5px;width:14px;height:17px;background:#c8443c;"></div>
<div style="left:1189px;top:371px;width:14px;height:1px;background:#e8bc0a;"></div>
<div style="left:1189px;top:384.5px;width:14px;height:2px;background:#c8443c;"></div>
<div style="left:1184.8px;top:259.5px;width:2.2px;height:5.5px;background:#8df08a;"></div>
<div style="left:1184.8px;top:354px;width:2.2px;height:5px;background:#8ac4f8;"></div>
<div style="left:1190.7px;top:244.2px;width:10px;height:33.8px;background:rgba(130,125,70,.5);border:1px solid rgba(80,80,50,.75);border-radius:5px;"></div>
<div style="left:1190.5px;top:76px;width:10.5px;height:10.5px;border-radius:50%;background:#c83a3a;"></div>
<span class="t" style="left:1194.6px;top:76.2px;line-height:10px;font-size:9px;color:#3f1414;font-weight:700;">!</span>
<div style="left:1203px;top:46px;width:15px;height:707px;background:#e8e8e8;border-left:1px solid #cdcdcd;"></div>
<span class="t" style="left:1213px;top:99.500px;font-size:11.5px;letter-spacing:-0.15px;color:#1a1a1a;line-height:14px;transform:translate(-50%,-50%) rotate(90deg);">Database</span>
<svg style="left:1205.5px;top:57px;" width="13" height="14" viewBox="0 0 13 14"><ellipse cx="7.500" cy="3" rx="6" ry="2.600" fill="#4aa3e0"/><path d="M1.500 5.500c0 3 12 3 12 0v2c0 3-12 3-12 0zM1.500 9.500c0 3 12 3 12 0v2c0 3-12 3-12 0z" fill="#4aa3e0"/></svg>
<div style="left:22px;top:441.8px;width:1181px;height:24.2px;background:linear-gradient(#c6cfe4,#b5bed7);border-bottom:1px solid #a9acb5;"></div>
<span class="t" style="left:27.5px;top:445.0px;line-height:18px;font-size:12.5px;color:#1a1a1a;letter-spacing:-0.869px;">Debug</span>
<svg style="left:65px;top:446px;" width="15" height="15" viewBox="0 0 12 12"><path d="M5.9.3C3.2.3 3.4 1.5 3.4 1.5v1.9h2.7v.5H2.2S.3 3.700.3 6.100c0 2.400 1.600 2.300 1.600 2.300h1V6.900s-.1-1.600 1.600-1.600h2.700s1.500 0 1.500-1.500V1.700S8.900.3 5.900.3z" fill="#3d7ab5"/><path d="M6.100 11.700c2.700 0 2.500-1.200 2.500-1.200V8.600H5.900v-.5h3.900s1.900.2 1.900-2.200c0-2.400-1.600-2.300-1.600-2.300h-1v1.500s.1 1.600-1.600 1.600H4.800s-1.500 0-1.500 1.500v2.100s-.2 1.400 2.800 1.400z" fill="#f7c93e"/></svg>
<div style="left:76px;top:456.5px;width:5px;height:5px;border-radius:50%;background:#1fd02a;border:0.5px solid #e8ffe8;"></div>
<span class="t" style="left:84.5px;top:445.0px;line-height:18px;font-size:12.5px;color:#1a1a1a;letter-spacing:-0.449px;">BlogsToWordpress</span>
<svg style="left:1155px;top:447.5px;" width="21" height="13" viewBox="0 0 21 13"><g transform="translate(6.5 6.5)"><g fill="#4d4d4d"><rect x="-1.250" y="-6.500" width="2.500" height="4" transform="rotate(0)"/><rect x="-1.250" y="-6.500" width="2.500" height="4" transform="rotate(45)"/><rect x="-1.250" y="-6.500" width="2.500" height="4" transform="rotate(90)"/><rect x="-1.250" y="-6.500" width="2.500" height="4" transform="rotate(135)"/><rect x="-1.250" y="-6.500" width="2.500" height="4" transform="rotate(180)"/><rect x="-1.250" y="-6.500" width="2.500" height="4" transform="rotate(225)"/><rect x="-1.250" y="-6.500" width="2.500" height="4" transform="rotate(270)"/><rect x="-1.250" y="-6.500" width="2.500" height="4" transform="rotate(315)"/></g><circle r="4.300" fill="#4d4d4d"/><circle r="1.700" fill="#bdc6dd"/></g><path d="M14.500 5.500h5l-2.500 3z" fill="#4d4d4d"/></svg>
<svg style="left:1183px;top:447px;" width="13" height="14" viewBox="0 0 13 14"><path d="M6.500 0.500v8M4 6l2.500 2.500L9 6" stroke="#555" stroke-width="1.100" fill="none"/><rect x="1" y="10.500" width="11" height="2.500" fill="#9a9a9a" stroke="#555" stroke-width=".8"/></svg>
<div style="left:22px;top:465.8px;width:1181px;height:26.7px;background:#e7e7e7;border-bottom:1px solid #b4b4b4;"></div>
<div style="left:22px;top:492.5px;width:1181px;height:3px;background:#fdfdfd;"></div>
<div style="left:22px;top:492.5px;width:30px;height:236.5px;background:#e9e9e9;border-right:1px solid #c9c9c9;"></div>
<div style="left:52px;top:465.5px;width:61px;height:27px;background:#fff;"></div>
<span class="t" style="left:58.5px;top:469.5px;line-height:18px;font-size:12.5px;color:#1a1a1a;letter-spacing:-0.588px;">Debugger</span>
<div style="left:113px;top:465.8px;width:87px;height:25.8px;background:#d2d2d2;"></div>
<svg style="left:120px;top:471px;" width="15" height="15" viewBox="0 0 15 15"><rect x=".8" y=".8" width="12" height="11" fill="#d5e6f5" stroke="#5a5a5a" stroke-width="1.600"/><rect x=".7" y=".2" width="12.200" height="2.300" fill="#3b82c4"/><rect x="3.500" y="4.500" width="6" height="4.500" fill="#8fb8dc"/><circle cx="10.500" cy="10.500" r="3.800" fill="#f0a020"/><path d="M10.500 8v4M8.800 10.500l1.700 1.800 1.700-1.800" stroke="#7a4a00" stroke-width=".9" fill="none"/></svg>
<span class="t" style="left:138px;top:469.5px;line-height:18px;font-size:12.5px;color:#1a1a1a;letter-spacing:-0.739px;">Console</span>
<svg style="left:185.5px;top:474px;" width="12" height="8" viewBox="0 0 12 8"><path d="M0 4.500h6.500M4.500 2.500l2 2-2 2" stroke="#444" stroke-width="1" fill="none"/><rect x="8.500" y="1" width="2.800" height="2.800" fill="#333"/></svg>
<svg style="left:205.5px;top:470px;" width="16" height="16" viewBox="0 0 16 16"><path d="M0.500 1l7 5-7 5z" fill="#d6453d"/><path d="M9 4.500h6.500M7 7.500h8.500" stroke="#5a5a5a" stroke-width="1.400"/><path d="M4 10.500h11.500M4 13.500h11.500" stroke="#3f7fb8" stroke-width="1.400"/></svg>
<div style="left:229px;top:467px;width:1px;height:24px;border-left:1px dotted #8a8a8a;"></div>
<svg style="left:236.5px;top:469.5px;" width="15" height="16" viewBox="0 0 15 16"><path d="M0.500 1h14" stroke="#5a5a5a" stroke-width="1.900"/><path d="M5.300 2.500h4.400v4.500h3.800L7.500 13 1.500 7h3.800z" fill="#2f86c8"/><path d="M0.500 14.500h14" stroke="#5a5a5a" stroke-width="1.900"/></svg>
<svg style="left:261.5px;top:469.5px;" width="15" height="16" viewBox="0 0 15 16"><path d="M1 3.500L3.500 1l6 6 2.500-2.500V12.500H4L6.500 10z" fill="#2f86c8"/><path d="M0.500 14.500h14" stroke="#5a5a5a" stroke-width="1.900"/></svg>
<svg style="left:286.5px;top:469.5px;" width="15" height="16" viewBox="0 0 15 16"><path d="M1 3.500L3.500 1l6 6 2.500-2.500V12.500H4L6.500 10z" fill="#2f86c8"/><path d="M8 8.500h7" stroke="#d6453d" stroke-width="1.600"/><path d="M0 8.500h4" stroke="#d6453d" stroke-width="1.600"/><path d="M0.500 14.500h14" stroke="#5a5a5a" stroke-width="1.900"/></svg>
<svg style="left:311.5px;top:469.5px;" width="15" height="16" viewBox="0 0 15 16"><path d="M1 3.500L3.500 1l6 6 2.500-2.500V12.500H4L6.500 10z" fill="#c4c4c4"/><path d="M0.500 14.500h14" stroke="#c4c4c4" stroke-width="1.400"/></svg>
<svg style="left:336.5px;top:469.5px;" width="15" height="16" viewBox="0 0 15 16"><path d="M3 12.500L0.500 10l6-6L4 1.500h8v8L9.500 7z" fill="#2f86c8" transform="translate(1.500 -.5)"/><path d="M0.500 14.500h14" stroke="#5a5a5a" stroke-width="1.900"/></svg>
<svg style="left:361px;top:469.5px;" width="16" height="17" viewBox="0 0 16 17"><path d="M0.500 2.500L2.500 0.500l4.500 4.500 2-2v6.500H2.500l2-2z" fill="#2f86c8"/><path d="M9.500 7.500c1 0 1.500.3 2 .8.500-.5 1-.8 2-.8M9.500 16.500c1 0 1.500-.3 2-.8.500.5 1 .8 2 .8M11.500 8.300v7.400" stroke="#333" stroke-width="1" fill="none"/></svg>
<div style="left:385px;top:467px;width:1px;height:24px;border-left:1px dotted #8a8a8a;"></div>
<svg style="left:393px;top:471.5px;" width="14" height="13" viewBox="0 0 14 13"><rect x=".6" y=".6" width="12.800" height="11.800" fill="#f4f4f4" stroke="#5a5a5a" stroke-width="1.100"/><rect x=".6" y=".6" width="12.800" height="2.800" fill="#3b6ea8"/><path d="M2.500 6h3M2.500 8h3M2.500 10h3M7 6h2" stroke="#6a6a6a" stroke-width="1.200"/><path d="M7 8h4.500" stroke="#3aa845" stroke-width="1.300"/><path d="M7 10h4.500" stroke="#d6453d" stroke-width="1.300"/></svg>
<div style="left:52px;top:495.3px;width:358px;height:27.3px;background:#bac2d9;border-top:1px solid #aeb3c2;border-bottom:1px solid #a3a8b6;"></div>
<div style="left:411px;top:495.3px;width:792px;height:27.3px;background:#bac2d9;border-top:1px solid #aeb3c2;border-bottom:1px solid #a3a8b6;"></div>
<div style="left:410px;top:494.5px;width:1px;height:234.5px;background:#c9c9c9;"></div>
<svg style="left:57.5px;top:500.5px;" width="13" height="13" viewBox="0 0 13 13"><rect x="0.500" y="0.500" width="9" height="9" fill="#e0e0e0" stroke="#7a7a7a" stroke-width="1"/><rect x="2.500" y="2.500" width="10" height="10" fill="#a9d5f7" stroke="#5a5a5a" stroke-width="1.100"/><path d="M6.700 5.500l-1.500 1.500 1.500 1.500M8.500 6.800l1.500 1.500-1.500 1.500" stroke="#2f5f8f" stroke-width="1" fill="none"/></svg>
<span class="t" style="left:75px;top:498.0px;line-height:18px;font-size:12.5px;color:#1a1a1a;letter-spacing:-0.812px;">Frames</span>
<svg style="left:395.5px;top:503px;" width="12" height="8" viewBox="0 0 12 8"><path d="M0 4.500h6.500M4.500 2.500l2 2-2 2" stroke="#444" stroke-width="1" fill="none"/><rect x="8.500" y="1" width="2.800" height="2.800" fill="#333"/></svg>
<svg style="left:416.5px;top:500.5px;" width="13" height="13" viewBox="0 0 13 13"><rect x="0" y="0.500" width="12.500" height="3" fill="#b5823c"/><rect x="0" y="5" width="12.500" height="3" fill="#b5823c"/><rect x="0" y="9.500" width="12.500" height="3" fill="#b5823c"/></svg>
<span class="t" style="left:434px;top:498.0px;line-height:18px;font-size:12.5px;color:#1a1a1a;letter-spacing:-0.410px;">Variables</span>
<svg style="left:1188.5px;top:503px;" width="12" height="8" viewBox="0 0 12 8"><path d="M0 4.500h6.500M4.500 2.500l2 2-2 2" stroke="#444" stroke-width="1" fill="none"/><rect x="8.500" y="1" width="2.800" height="2.800" fill="#333"/></svg>
<div style="left:52px;top:522.6px;width:358px;height:206.4px;background:#fff;"></div>
<div style="left:55px;top:526px;width:295px;height:19.5px;background:#fff;border:1px solid #bdbdbd;border-radius:4px;box-shadow:0 .5px 1px rgba(0,0,0,.25);"></div>
<div style="left:333.5px;top:526px;width:16.5px;height:19.5px;background:linear-gradient(#5aa7ff,#1a6cf0);border-radius:0 4px 4px 0;"></div>
<svg style="left:337.5px;top:529.5px;" width="9" height="13" viewBox="0 0 9 13"><path d="M1.500 4.500l3-3 3 3M1.500 8.500l3 3 3-3" stroke="#fff" stroke-width="1.400" fill="none"/></svg>
<svg style="left:64px;top:528.5px;" width="10" height="15" viewBox="0 0 10 15"><rect x="0.500" y="0" width="9" height="2" fill="#7a5a30"/><rect x="0.500" y="13" width="9" height="2" fill="#7a5a30"/><rect x="1.500" y="2" width="7" height="11" fill="#e09a30"/><path d="M1.500 4h7M1.500 6h7M1.500 8h7M1.500 10h7M1.500 12h7" stroke="#8a5a10" stroke-width=".7"/></svg>
<span class="t" style="left:81px;top:527.0px;line-height:18px;font-size:14.5px;color:#111;letter-spacing:-0.588px;">MainThread</span>
<div style="left:357px;top:524px;width:1px;height:25px;border-left:1px dotted #8a8a8a;"></div>
<svg style="left:366.5px;top:530px;" width="11" height="12" viewBox="0 0 11 12"><path d="M5.500 0L11 5.500H7.500V12h-4V5.500H0z" fill="#c0c0c0"/></svg>
<svg style="left:391.5px;top:530px;" width="11" height="12" viewBox="0 0 11 12"><path d="M5.500 12L11 6.500H7.500V0h-4v6.500H0z" fill="#2f86c8"/></svg>
<div style="left:52px;top:550px;width:358px;height:19.7px;background:#0a30d0;"></div>
<div style="left:52px;top:650px;width:358px;height:40px;background:#fffcd6;"></div>
<svg style="left:55.5px;top:553.5px;" width="13" height="13" viewBox="0 0 13 13"><rect x="0.500" y="0.500" width="9" height="9" fill="#e0e0e0" stroke="#7a7a7a" stroke-width="1"/><rect x="2.500" y="2.500" width="10" height="10" fill="#a9d5f7" stroke="#5a5a5a" stroke-width="1.100"/><path d="M6.700 5.500l-1.500 1.500 1.500 1.500M8.500 6.800l1.500 1.500-1.500 1.500" stroke="#2f5f8f" stroke-width="1" fill="none"/></svg>
<span class="t" style="left:73px;top:551.0px;line-height:18px;font-size:14px;color:#fff;letter-spacing:-0.268px;">removeInvalidCharInUrl,</span>
<span class="t" style="left:223.2px;top:551.0px;line-height:18px;font-size:14px;color:#fff;letter-spacing:0.136px;">BlogsToWordpress.py:966</span>
<svg style="left:55.5px;top:573.5px;" width="13" height="13" viewBox="0 0 13 13"><rect x="0.500" y="0.500" width="9" height="9" fill="#e0e0e0" stroke="#7a7a7a" stroke-width="1"/><rect x="2.500" y="2.500" width="10" height="10" fill="#a9d5f7" stroke="#5a5a5a" stroke-width="1.100"/><path d="M6.700 5.500l-1.500 1.500 1.500 1.500M8.500 6.800l1.500 1.500-1.500 1.500" stroke="#2f5f8f" stroke-width="1" fill="none"/></svg>
<span class="t" style="left:73px;top:571.0px;line-height:18px;font-size:14px;color:#111;letter-spacing:-0.355px;">generatePostName,</span>
<span class="t" style="left:197.2px;top:571.0px;line-height:18px;font-size:14px;color:#111;letter-spacing:0.060px;">BlogsToWordpress.py:1355</span>
<svg style="left:55.5px;top:593.5px;" width="13" height="13" viewBox="0 0 13 13"><rect x="0.500" y="0.500" width="9" height="9" fill="#e0e0e0" stroke="#7a7a7a" stroke-width="1"/><rect x="2.500" y="2.500" width="10" height="10" fill="#a9d5f7" stroke="#5a5a5a" stroke-width="1.100"/><path d="M6.700 5.500l-1.500 1.500 1.500 1.500M8.500 6.800l1.500 1.500-1.500 1.500" stroke="#2f5f8f" stroke-width="1" fill="none"/></svg>
<span class="t" style="left:73px;top:591.0px;line-height:18px;font-size:14px;color:#111;letter-spacing:-0.214px;">processSinglePost,</span>
<span class="t" style="left:194.3px;top:591.0px;line-height:18px;font-size:14px;color:#111;letter-spacing:0.132px;">BlogsToWordpress.py:669</span>
<svg style="left:55.5px;top:613.5px;" width="13" height="13" viewBox="0 0 13 13"><rect x="0.500" y="0.500" width="9" height="9" fill="#e0e0e0" stroke="#7a7a7a" stroke-width="1"/><rect x="2.500" y="2.500" width="10" height="10" fill="#a9d5f7" stroke="#5a5a5a" stroke-width="1.100"/><path d="M6.700 5.500l-1.500 1.500 1.500 1.500M8.500 6.800l1.500 1.500-1.500 1.500" stroke="#2f5f8f" stroke-width="1" fill="none"/></svg>
<span class="t" style="left:73px;top:611.0px;line-height:18px;font-size:14px;color:#111;letter-spacing:-0.487px;">main,</span>
<span class="t" style="left:109.0px;top:611.0px;line-height:18px;font-size:14px;color:#111;letter-spacing:0.077px;">BlogsToWordpress.py:1653</span>
<svg style="left:55.5px;top:633.5px;" width="13" height="13" viewBox="0 0 13 13"><rect x="0.500" y="0.500" width="9" height="9" fill="#e0e0e0" stroke="#7a7a7a" stroke-width="1"/><rect x="2.500" y="2.500" width="10" height="10" fill="#a9d5f7" stroke="#5a5a5a" stroke-width="1.100"/><path d="M6.700 5.500l-1.500 1.500 1.500 1.500M8.500 6.800l1.500 1.500-1.500 1.500" stroke="#2f5f8f" stroke-width="1" fill="none"/></svg>
<span class="t" style="left:73px;top:631.0px;line-height:18px;font-size:14px;color:#111;letter-spacing:-0.408px;">&lt;module&gt;,</span>
<span class="t" style="left:141.2px;top:631.0px;line-height:18px;font-size:14px;color:#111;letter-spacing:0.060px;">BlogsToWordpress.py:1895</span>
<svg style="left:55.5px;top:653.5px;" width="13" height="13" viewBox="0 0 13 13"><rect x="0.500" y="0.500" width="9" height="9" fill="#e0e0e0" stroke="#7a7a7a" stroke-width="1"/><rect x="2.500" y="2.500" width="10" height="10" fill="#a9d5f7" stroke="#5a5a5a" stroke-width="1.100"/><path d="M6.700 5.500l-1.500 1.500 1.500 1.500M8.500 6.800l1.500 1.500-1.500 1.500" stroke="#2f5f8f" stroke-width="1" fill="none"/></svg>
<span class="t" style="left:73px;top:651.0px;line-height:18px;font-size:14px;color:#8a8a8a;letter-spacing:-0.631px;">run,</span>
<span class="t" style="left:101.1px;top:651.0px;line-height:18px;font-size:14px;color:#8a8a8a;letter-spacing:0.032px;">pydevd.py:974</span>
<svg style="left:55.5px;top:673.5px;" width="13" height="13" viewBox="0 0 13 13"><rect x="0.500" y="0.500" width="9" height="9" fill="#e0e0e0" stroke="#7a7a7a" stroke-width="1"/><rect x="2.500" y="2.500" width="10" height="10" fill="#a9d5f7" stroke="#5a5a5a" stroke-width="1.100"/><path d="M6.700 5.500l-1.500 1.500 1.500 1.500M8.500 6.800l1.500 1.500-1.500 1.500" stroke="#2f5f8f" stroke-width="1" fill="none"/></svg>
<span class="t" style="left:73px;top:671.0px;line-height:18px;font-size:14px;color:#8a8a8a;letter-spacing:-0.408px;">&lt;module&gt;,</span>
<span class="t" style="left:141.2px;top:671.0px;line-height:18px;font-size:14px;color:#8a8a8a;letter-spacing:-0.011px;">pydevd.py:1596</span>
<svg style="left:27.5px;top:471px;" width="18" height="17" viewBox="0 0 18 17"><path d="M9 4.200A5.600 5.600 0 1 0 13.800 11" stroke="#2e9a3e" stroke-width="2.500" fill="none"/><path d="M7.500 0.300l6 4-6 4z" fill="#2e9a3e"/><rect x="9.500" y="9.500" width="7" height="7" fill="#6a6a6a"/></svg>
<div style="left:25px;top:494.5px;width:24px;height:1px;border-top:1px dotted #9a9a9a;"></div>
<svg style="left:29.5px;top:502px;" width="14" height="16" viewBox="0 0 14 16"><path d="M0 0v16M1.500 0v16" stroke="#6a6a6a" stroke-width="1" stroke-dasharray="1 1"/><path d="M3 0l11 8-11 8z" fill="#2b9a3c"/></svg>
<svg style="left:31px;top:528.5px;" width="11" height="13" viewBox="0 0 11 13"><rect x="0" y="0" width="3.800" height="13" fill="#bdbdbd"/><rect x="6.500" y="0" width="3.800" height="13" fill="#bdbdbd"/></svg>
<div style="left:30px;top:554px;width:12px;height:12px;background:#e0524c;"></div>
<div style="left:25px;top:575px;width:24px;height:1px;border-top:1px dotted #9a9a9a;"></div>
<svg style="left:29px;top:584px;" width="15" height="15" viewBox="0 0 15 15"><circle cx="5" cy="4.500" r="4.300" fill="#d9443e"/><circle cx="5" cy="10.500" r="4.300" fill="#d9443e"/><circle cx="12" cy="5" r="1.800" fill="none" stroke="#6a6a6a" stroke-width="1"/><circle cx="12" cy="10" r="1.800" fill="none" stroke="#6a6a6a" stroke-width="1"/></svg>
<svg style="left:29px;top:609px;" width="14" height="14" viewBox="0 0 14 14"><circle cx="7" cy="7" r="5.800" fill="#e0625c" stroke="#5a5a5a" stroke-width="1.300"/><path d="M2.800 11.200l8.400-8.400" stroke="#5a5a5a" stroke-width="1.500"/></svg>
<div style="left:25px;top:631.5px;width:24px;height:1px;border-top:1px dotted #9a9a9a;"></div>
<svg style="left:29.5px;top:639.5px;" width="14" height="15" viewBox="0 0 14 15"><rect x=".5" y=".5" width="7.500" height="6" fill="#dcdcdc" stroke="#6a6a6a" stroke-width="1"/><rect x="9.500" y=".5" width="4" height="6" fill="#dcdcdc" stroke="#6a6a6a" stroke-width="1"/><rect x=".5" y="8.500" width="13" height="6" fill="#b8b8b8" stroke="#6a6a6a" stroke-width="1"/><rect x=".5" y=".5" width="7.500" height="1.800" fill="#3b82c4"/></svg>
<svg style="left:29.5px;top:665px;" width="16" height="15" viewBox="0 0 16 15"><g transform="translate(6.5 6.5)"><g fill="#2f86c8"><rect x="-1.250" y="-6.500" width="2.500" height="4" transform="rotate(0)"/><rect x="-1.250" y="-6.500" width="2.500" height="4" transform="rotate(45)"/><rect x="-1.250" y="-6.500" width="2.500" height="4" transform="rotate(90)"/><rect x="-1.250" y="-6.500" width="2.500" height="4" transform="rotate(135)"/><rect x="-1.250" y="-6.500" width="2.500" height="4" transform="rotate(180)"/><rect x="-1.250" y="-6.500" width="2.500" height="4" transform="rotate(225)"/><rect x="-1.250" y="-6.500" width="2.500" height="4" transform="rotate(270)"/><rect x="-1.250" y="-6.500" width="2.500" height="4" transform="rotate(315)"/></g><circle r="4.300" fill="#2f86c8"/><circle r="1.700" fill="#ececec"/></g><path d="M11.500 11.500h4.500l-2.250 3z" fill="#333"/></svg>
<div style="left:25px;top:687px;width:24px;height:1px;border-top:1px dotted #9a9a9a;"></div>
<span class="t" style="left:32.5px;top:711.5px;line-height:14px;font-size:14px;color:#555;letter-spacing:0.203px;">&#187;</span>
<div style="left:411px;top:522.6px;width:26px;height:206.4px;background:#e9e9e9;border-right:1px solid #c9c9c9;"></div>
<svg style="left:415px;top:527px;" width="17" height="16" viewBox="0 0 17 16"><path d="M6 0v9.500M1.500 4.500h9" stroke="#2b9a3c" stroke-width="2.200"/><circle cx="3.800" cy="11.500" r="2.600" fill="#9adf9a" stroke="#2b8a3a" stroke-width="1.100"/><circle cx="9.500" cy="11.500" r="2.600" fill="#9adf9a" stroke="#2b8a3a" stroke-width="1.100"/><path d="M12 10.500c1.500-4 3-5 4.500-3.500" stroke="#555" stroke-width="1" fill="none"/></svg>
<div style="left:417px;top:559px;width:12.5px;height:1.5px;background:#b4b4b4;"></div>
<svg style="left:418px;top:582px;" width="11" height="7" viewBox="0 0 11 7"><path d="M0 6.500L5.500 0 11 6.500z" fill="#b4b4b4"/></svg>
<svg style="left:418px;top:606px;" width="11" height="7" viewBox="0 0 11 7"><path d="M0 0h11L5.500 6.500z" fill="#b4b4b4"/></svg>
<svg style="left:416px;top:626.5px;" width="15" height="15" viewBox="0 0 15 15"><path d="M4.500 3.500V.6h6l3 3v8h-4" fill="none" stroke="#c2c2c2" stroke-width="1.200"/><path d="M.6 3.500h6l3 3v8h-9z" fill="#eeeeee" stroke="#c2c2c2" stroke-width="1.200"/></svg>
<div style="left:412.5px;top:649px;width:22px;height:22px;background:#d3d3d3;border:1px solid #bdbdbd;border-radius:3px;"></div>
<svg style="left:415.5px;top:653px;" width="16" height="14" viewBox="0 0 16 14"><rect x=".6" y=".6" width="14.800" height="10.800" fill="#e6eef6" stroke="#6a8ab0" stroke-width="1"/><rect x=".6" y=".6" width="14.800" height="2.600" fill="#3b82c4"/><circle cx="4" cy="10.500" r="2.600" fill="#7fd07f" stroke="#2b8a3a" stroke-width="1.100"/><circle cx="9.500" cy="10.500" r="2.600" fill="#7fd07f" stroke="#2b8a3a" stroke-width="1.100"/><path d="M3 8c.5-3 2-3.500 3-2.500M11.500 9.500c1-3 2-3.500 3-2.500" stroke="#555" stroke-width=".9" fill="none"/></svg>
<div style="left:437px;top:522.6px;width:766px;height:206.4px;background:#fff;"></div>
<svg style="left:461px;top:526.5px;" width="12" height="12" viewBox="0 0 12 12"><rect x=".5" y=".5" width="11" height="11" fill="#c4e2f8" stroke="#5a5a5a" stroke-width="1"/><text x="6" y="5.800" font-size="6" text-anchor="middle" fill="#2a4660" font-family="Liberation Sans, sans-serif" font-weight="700">01</text><text x="6" y="10.600" font-size="6" text-anchor="middle" fill="#2a4660" font-family="Liberation Sans, sans-serif" font-weight="700">01</text></svg>
<span class="t" style="left:477.2px;top:523.0px;line-height:18px;font-size:14px;color:#7a1414;letter-spacing:-0.600px;">c</span>
<span class="t" style="left:487.9px;top:523.0px;line-height:18px;font-size:14px;color:#111;letter-spacing:-0.988px;">=</span>
<span class="t" style="left:500.4px;top:523.0px;line-height:18px;font-size:14px;color:#808080;letter-spacing:0.379px;">{str}</span>
<span class="t" style="left:531.7px;top:523.0px;line-height:18px;font-size:14px;color:#111;letter-spacing:-0.035px;">'T'</span>
<svg style="left:440.5px;top:548px;" width="9" height="8" viewBox="0 0 9 8"><path d="M0 0h9L4.500 7.500z" fill="#8d8d8d"/></svg>
<svg style="left:461px;top:545.5px;" width="12" height="12" viewBox="0 0 12 12"><rect x="0" y="0.500" width="12" height="3" fill="#b5823c"/><rect x="0" y="4.750" width="12" height="3" fill="#b5823c"/><rect x="0" y="9" width="12" height="3" fill="#b5823c"/></svg>
<span class="t" style="left:477.2px;top:542.0px;line-height:18px;font-size:14px;color:#7a1414;letter-spacing:-0.229px;">charNumerP</span>
<span class="t" style="left:557.3px;top:542.0px;line-height:18px;font-size:14px;color:#111;letter-spacing:-0.987px;">=</span>
<span class="t" style="left:569.3px;top:542.0px;line-height:18px;font-size:14px;color:#808080;letter-spacing:-0.497px;">{SRE_Pattern}</span>
<span class="t" style="left:658.9px;top:542.0px;line-height:18px;font-size:14px;color:#111;letter-spacing:-0.209px;">&lt;_sre.SRE_Pattern object at 0x102658030&gt;</span>
<svg style="left:481px;top:564.5px;" width="12" height="12" viewBox="0 0 12 12"><rect x=".5" y=".5" width="11" height="11" fill="#c4e2f8" stroke="#5a5a5a" stroke-width="1"/><text x="6" y="5.800" font-size="6" text-anchor="middle" fill="#2a4660" font-family="Liberation Sans, sans-serif" font-weight="700">01</text><text x="6" y="10.600" font-size="6" text-anchor="middle" fill="#2a4660" font-family="Liberation Sans, sans-serif" font-weight="700">01</text></svg>
<span class="t" style="left:497.2px;top:561.0px;line-height:18px;font-size:14px;color:#7a1414;letter-spacing:-0.016px;">flags</span>
<span class="t" style="left:531.2px;top:561.0px;line-height:18px;font-size:14px;color:#111;letter-spacing:-0.987px;">=</span>
<span class="t" style="left:543.7px;top:561.0px;line-height:18px;font-size:14px;color:#808080;letter-spacing:0.292px;">{int}</span>
<span class="t" style="left:573.8px;top:561.0px;line-height:18px;font-size:14px;color:#111;letter-spacing:-0.597px;">0</span>
<svg style="left:460.5px;top:586px;" width="9" height="8" viewBox="0 0 9 8"><path d="M0 0h9L4.500 7.500z" fill="#8d8d8d"/></svg>
<svg style="left:481px;top:583.5px;" width="12" height="12" viewBox="0 0 12 12"><rect x="0" y="0.500" width="12" height="3" fill="#b5823c"/><rect x="0" y="4.750" width="12" height="3" fill="#b5823c"/><rect x="0" y="9" width="12" height="3" fill="#b5823c"/></svg>
<span class="t" style="left:497.2px;top:580.0px;line-height:18px;font-size:14px;color:#7a1414;letter-spacing:0.032px;">groupindex</span>
<span class="t" style="left:571.3px;top:580.0px;line-height:18px;font-size:14px;color:#111;letter-spacing:-0.987px;">=</span>
<span class="t" style="left:583.1px;top:580.0px;line-height:18px;font-size:14px;color:#808080;letter-spacing:0.227px;">{dict}</span>
<span class="t" style="left:620.6px;top:580.0px;line-height:18px;font-size:14px;color:#111;letter-spacing:-0.030px;">{}</span>
<svg style="left:501px;top:602.5px;" width="12" height="12" viewBox="0 0 12 12"><rect x=".5" y=".5" width="11" height="11" fill="#c4e2f8" stroke="#5a5a5a" stroke-width="1"/><text x="6" y="5.800" font-size="6" text-anchor="middle" fill="#2a4660" font-family="Liberation Sans, sans-serif" font-weight="700">01</text><text x="6" y="10.600" font-size="6" text-anchor="middle" fill="#2a4660" font-family="Liberation Sans, sans-serif" font-weight="700">01</text></svg>
<span class="t" style="left:517.2px;top:599.0px;line-height:18px;font-size:14px;color:#7a1414;letter-spacing:-1.104px;">__len__</span>
<span class="t" style="left:563.8px;top:599.0px;line-height:18px;font-size:14px;color:#111;letter-spacing:-0.987px;">=</span>
<span class="t" style="left:575.5px;top:599.0px;line-height:18px;font-size:14px;color:#808080;letter-spacing:0.292px;">{int}</span>
<span class="t" style="left:605.6px;top:599.0px;line-height:18px;font-size:14px;color:#111;letter-spacing:-0.797px;">0</span>
<svg style="left:481px;top:621.5px;" width="12" height="12" viewBox="0 0 12 12"><rect x=".5" y=".5" width="11" height="11" fill="#c4e2f8" stroke="#5a5a5a" stroke-width="1"/><text x="6" y="5.800" font-size="6" text-anchor="middle" fill="#2a4660" font-family="Liberation Sans, sans-serif" font-weight="700">01</text><text x="6" y="10.600" font-size="6" text-anchor="middle" fill="#2a4660" font-family="Liberation Sans, sans-serif" font-weight="700">01</text></svg>
<span class="t" style="left:497.2px;top:618.0px;line-height:18px;font-size:14px;color:#7a1414;letter-spacing:0.081px;">groups</span>
<span class="t" style="left:545.5px;top:618.0px;line-height:18px;font-size:14px;color:#111;letter-spacing:-0.987px;">=</span>
<span class="t" style="left:557.3px;top:618.0px;line-height:18px;font-size:14px;color:#808080;letter-spacing:0.312px;">{int}</span>
<span class="t" style="left:587.6px;top:618.0px;line-height:18px;font-size:14px;color:#111;letter-spacing:-0.597px;">0</span>
<svg style="left:481px;top:640.5px;" width="12" height="12" viewBox="0 0 12 12"><rect x=".5" y=".5" width="11" height="11" fill="#c4e2f8" stroke="#5a5a5a" stroke-width="1"/><text x="6" y="5.800" font-size="6" text-anchor="middle" fill="#2a4660" font-family="Liberation Sans, sans-serif" font-weight="700">01</text><text x="6" y="10.600" font-size="6" text-anchor="middle" fill="#2a4660" font-family="Liberation Sans, sans-serif" font-weight="700">01</text></svg>
<span class="t" style="left:497.2px;top:637.0px;line-height:18px;font-size:14px;color:#7a1414;letter-spacing:0.129px;">pattern</span>
<span class="t" style="left:546.7px;top:637.0px;line-height:18px;font-size:14px;color:#111;letter-spacing:-0.987px;">=</span>
<span class="t" style="left:558.5px;top:637.0px;line-height:18px;font-size:14px;color:#808080;letter-spacing:0.279px;">{str}</span>
<span class="t" style="left:589.3px;top:637.0px;line-height:18px;font-size:14px;color:#111;letter-spacing:0.848px;">'[\\w\\|\\-]'</span>
<svg style="left:461px;top:659.5px;" width="12" height="12" viewBox="0 0 12 12"><rect x=".5" y=".5" width="11" height="11" fill="#c4e2f8" stroke="#5a5a5a" stroke-width="1"/><text x="6" y="5.800" font-size="6" text-anchor="middle" fill="#2a4660" font-family="Liberation Sans, sans-serif" font-weight="700">01</text><text x="6" y="10.600" font-size="6" text-anchor="middle" fill="#2a4660" font-family="Liberation Sans, sans-serif" font-weight="700">01</text></svg>
<span class="t" style="left:477.2px;top:656.0px;line-height:18px;font-size:14px;color:#7a1414;letter-spacing:0.066px;">filterd_str</span>
<span class="t" style="left:540.5px;top:656.0px;line-height:18px;font-size:14px;color:#111;letter-spacing:-0.987px;">=</span>
<span class="t" style="left:552.3px;top:656.0px;line-height:18px;font-size:14px;color:#808080;letter-spacing:0.259px;">{str}</span>
<span class="t" style="left:583.8px;top:656.0px;line-height:18px;font-size:14px;color:#111;letter-spacing:-0.280px;">''</span>
<svg style="left:461px;top:678.5px;" width="12" height="12" viewBox="0 0 12 12"><rect x=".5" y=".5" width="11" height="11" fill="#c4e2f8" stroke="#5a5a5a" stroke-width="1"/><text x="6" y="5.800" font-size="6" text-anchor="middle" fill="#2a4660" font-family="Liberation Sans, sans-serif" font-weight="700">01</text><text x="6" y="10.600" font-size="6" text-anchor="middle" fill="#2a4660" font-family="Liberation Sans, sans-serif" font-weight="700">01</text></svg>
<span class="t" style="left:477.2px;top:675.0px;line-height:18px;font-size:14px;color:#7a1414;letter-spacing:0.133px;">inputString</span>
<span class="t" style="left:551px;top:675.0px;line-height:18px;font-size:14px;color:#111;letter-spacing:-0.987px;">=</span>
<span class="t" style="left:563.3px;top:675.0px;line-height:18px;font-size:14px;color:#808080;letter-spacing:0.079px;">{str}</span>
<span class="t" style="left:593.3px;top:675.0px;line-height:18px;font-size:14px;color:#111;letter-spacing:0.067px;">'The core of a high-performance distributed storage system'</span>
<div style="left:0px;top:729px;width:1218px;height:23px;background:#ececec;border-top:1px solid #cfcfcf;"></div>
<div style="left:358px;top:729.5px;width:85px;height:22px;background:#ababab;"></div>
<svg style="left:35px;top:734px;" width="12" height="14" viewBox="0 0 12 14"><path d="M2.500 3v8M2.500 9.500c0-3 6.500-2 6.500-5.500" stroke="#5a5a5a" stroke-width="1.300" fill="none"/><circle cx="2.500" cy="2.300" r="1.700" fill="#fff" stroke="#3b82c4" stroke-width="1"/><circle cx="2.500" cy="11.700" r="1.700" fill="#fff" stroke="#3b82c4" stroke-width="1"/><circle cx="9.300" cy="3.300" r="1.700" fill="#fff" stroke="#3b82c4" stroke-width="1"/></svg>
<span class="t" style="left:51.25px;top:732.0px;line-height:18px;font-size:12.5px;color:#1a1a1a;letter-spacing:-0.493px;"><u>9</u>: Version Control</span>
<svg style="left:167px;top:733.5px;" width="13" height="13" viewBox="0 0 12 12"><path d="M5.9.3C3.2.3 3.4 1.5 3.4 1.5v1.9h2.7v.5H2.2S.3 3.700.3 6.100c0 2.400 1.600 2.300 1.600 2.300h1V6.900s-.1-1.600 1.600-1.600h2.700s1.500 0 1.500-1.500V1.700S8.900.3 5.900.3z" fill="#3d7ab5"/><path d="M6.100 11.700c2.700 0 2.500-1.200 2.500-1.200V8.600H5.900v-.5h3.900s1.900.2 1.900-2.200c0-2.400-1.600-2.300-1.600-2.300h-1v1.500s.1 1.600-1.600 1.600H4.800s-1.500 0-1.500 1.500v2.100s-.2 1.400 2.800 1.400z" fill="#f7c93e"/></svg>
<svg style="left:175px;top:741px;" width="6" height="7" viewBox="0 0 6 7"><path d="M1 .8l3.800 2.700L1 6.200" stroke="#222" stroke-width="1.300" fill="none"/></svg>
<span class="t" style="left:184.5px;top:732.0px;line-height:18px;font-size:12.5px;color:#1a1a1a;letter-spacing:-0.608px;">Python Console</span>
<svg style="left:286px;top:735px;" width="13" height="12" viewBox="0 0 13 12"><rect x=".6" y=".6" width="11.800" height="10.800" fill="#d0d0d0" stroke="#4a4a4a" stroke-width="1.200"/><rect x="2" y="3" width="9" height="7" fill="#3a3a3a"/><path d="M3.500 5l2 1.500-2 1.500M6.500 8.500h3" stroke="#fff" stroke-width=".9" fill="none"/></svg>
<span class="t" style="left:303.75px;top:732.0px;line-height:18px;font-size:12.5px;color:#1a1a1a;letter-spacing:-0.438px;">Terminal</span>
<svg style="left:368px;top:733px;" width="16" height="16" viewBox="0 0 16 16"><path d="M3.500 2.500l2 2M10.500 2.500l-2 2M1 6.500h2.500M1 11l2.500-1M3 15l2-2.500M12.500 6.500l1.500-1M12.500 10.500l1.500 1" stroke="#555" stroke-width="1" fill="none"/><ellipse cx="7.300" cy="8.800" rx="5" ry="5.600" fill="#2f9c40"/><path d="M8.800 3.450A5 5.600 0 0 1 8.800 14.150A9 9 0 0 0 8.800 3.450z" fill="#3a3a3a"/><path d="M10.300 5.500A7 7 0 0 1 10.300 12" stroke="#d8d8d8" stroke-width=".8" fill="none"/><circle cx="13" cy="13.500" r="2.200" fill="#1fd02a"/></svg>
<span class="t" style="left:386.25px;top:732.0px;line-height:18px;font-size:12.5px;color:#1a1a1a;letter-spacing:-0.561px;"><u>5</u>: Debug</span>
<svg style="left:454px;top:734px;" width="15" height="14" viewBox="0 0 15 14"><circle cx="4" cy="3.500" r="2.800" fill="#f4f4f4" stroke="#6a6a6a" stroke-width="1"/><circle cx="9" cy="7.500" r="4" fill="#f0b070"/><path d="M4.800 6.500c1-3.500 7.500-3.500 8.400 0-2-.8-6.400-.8-8.400 0z" fill="#2a2a2a"/><path d="M5 13.500c.5-2.500 7.500-2.500 8 0z" fill="#3b82c4"/></svg>
<span class="t" style="left:471.25px;top:732.0px;line-height:18px;font-size:12.5px;color:#1a1a1a;letter-spacing:-0.759px;"><u>6</u>: TODO</span>
<svg style="left:1121px;top:733px;" width="18" height="16" viewBox="0 0 18 16"><path d="M8.500 1C4.500 1 1.500 3.800 1.500 7.500S4.500 14 8.500 14c1.200 0 2.300-.3 3.300-.7l3.700 1.200-1.200-3c.8-1.100 1.200-2.500 1.200-4C15.500 3.800 12.500 1 8.500 1z" fill="none" stroke="#555" stroke-width="1.100"/></svg>
<span class="t" style="left:1142px;top:732.0px;line-height:18px;font-size:12.5px;color:#1a1a1a;letter-spacing:-0.677px;">Event Log</span>
<div style="left:0px;top:766px;width:1218px;height:9px;background:#1b1b1b;"></div>
<div style="left:212px;top:772px;width:1006px;height:3px;background:#2a2a2a;"></div>
<div style="left:0px;top:752px;width:1218px;height:20.6px;background:#ececec;border-top:1px solid #dadada;border-radius:0 0 0 5px;"></div>
<div style="left:6px;top:757px;width:14px;height:12px;background:#bdbdbd;border:1px solid #6a6a6a;border-bottom:2px solid #4a4a4a;"></div>
<span class="t" style="left:964.7px;top:754.0px;line-height:18px;font-size:12.5px;color:#1a1a1a;letter-spacing:-0.616px;">966:1</span>
<span class="t" style="left:1004.4px;top:754.0px;line-height:18px;font-size:11.5px;color:#1a1a1a;letter-spacing:-0.658px;">CRLF</span>
<svg style="left:1032.2px;top:758.5px;" width="6" height="9" viewBox="0 0 6 9"><path d="M0 3.500L3 0l3 3.500zM0 5.500h6L3 9z" fill="#333"/></svg>
<span class="t" style="left:1052px;top:754.0px;line-height:18px;font-size:12.5px;color:#8a8a8a;letter-spacing:-0.684px;">UTF-8</span>
<span class="t" style="left:1096.8px;top:754.0px;line-height:18px;font-size:12.5px;color:#1a1a1a;letter-spacing:-0.402px;">Git: master</span>
<svg style="left:1156.5px;top:758.5px;" width="6" height="9" viewBox="0 0 6 9"><path d="M0 3.500L3 0l3 3.500zM0 5.500h6L3 9z" fill="#333"/></svg>
<svg style="left:1179px;top:757px;" width="11" height="11" viewBox="0 0 11 11"><path d="M2 5V3.200C2 1 6 1 6 3.200" stroke="#555" stroke-width="1.200" fill="none"/><rect x="3.500" y="5" width="7" height="5.500" fill="#fff" stroke="#444" stroke-width="1.200"/><rect x="6" y="6.800" width="2" height="2" fill="#444"/></svg>
<svg style="left:1203px;top:755px;" width="14" height="16" viewBox="0 0 14 16"><rect x="3" y="1" width="8" height="5" fill="none" stroke="#555" stroke-width="1"/><path d="M1 6.500h12" stroke="#555" stroke-width="1.200"/><circle cx="4.500" cy="9" r="2" fill="none" stroke="#555" stroke-width="1"/><circle cx="9.500" cy="9" r="2" fill="none" stroke="#555" stroke-width="1"/><path d="M3.500 12.500c1 2.500 6 2.500 7 0" stroke="#555" stroke-width="1" fill="none"/></svg>
<div style="left:0px;top:0px;width:1.3px;height:100px;background:#a0a0a0;"></div>
<div style="left:0px;top:100px;width:1.3px;height:138px;background:#141414;"></div>
<div style="left:0px;top:238px;width:1.3px;height:20px;background:#8a8a8a;"></div>
<div style="left:0px;top:258px;width:1.3px;height:60px;background:#3c4152;"></div>
<div style="left:0px;top:318px;width:1.3px;height:82px;background:#777;"></div>
<div style="left:0px;top:400px;width:1.3px;height:15px;background:#555;"></div>
<div style="left:0px;top:415px;width:1.3px;height:360px;background:#141414;"></div>
</div>
</body>
</html>
